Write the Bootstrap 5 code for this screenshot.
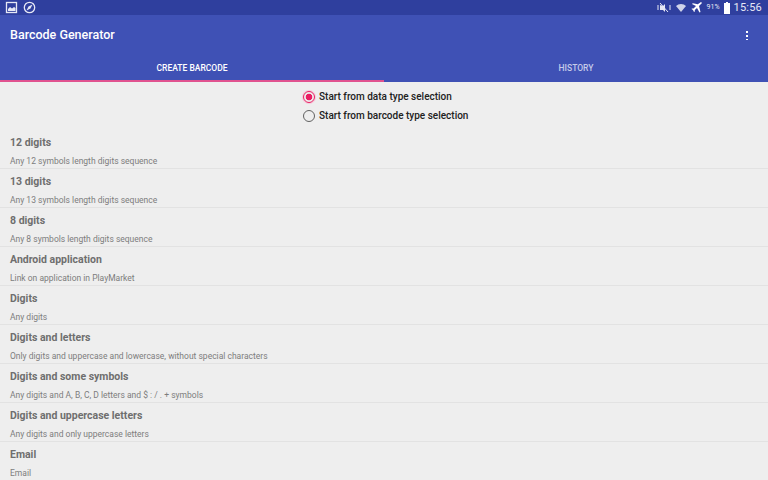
<!DOCTYPE html>
<html lang="en">
<head>
    <meta charset="UTF-8">
    <meta name="viewport" content="width=device-width, initial-scale=1.0">
    <title>Barcode Generator</title>
    <link rel="stylesheet" href="https://cdn.jsdelivr.net/npm/bootstrap@5.3.0/dist/css/bootstrap.min.css">
    <style>
        html, body { height: 100%; overflow: hidden; }
        body { background: #eeeeee; font-family: Roboto, "Liberation Sans", sans-serif; }
        .status-strip { height: 15px; background: #2f3f9e; padding: 0 6px 0 5px; color: #e6e8f5; }
        .status-strip svg { display: block; }
        .batt-text { font-size: 7px; line-height: 15px; }
        .clock-text { font-size: 11px; line-height: 15px; letter-spacing: .2px; }
        .app-head { background: #3f51b5; height: 67px; }
        .title-row { height: 39px; padding: 0 20px 0 10px; }
        .app-title { font-size: 12.5px; font-weight: 500; color: #fff; margin: 0; }
        .dots-menu { width: 2px; height: 10px; background: radial-gradient(circle, #fff 1px, transparent 1.2px) 0 0 / 2px 4px repeat-y; }
        .tab-strip { height: 28px; }
        .tab-item { width: 50%; text-align: center; font-size: 8.5px; font-weight: 500; line-height: 28px; color: #c5cbe9; }
        .tab-active { color: #fff; box-shadow: inset 0 -2px 0 #e0528f; }
        .mode-box { padding-top: 5px; height: 48px; }
        .mode-line { height: 19px; font-size: 10px; font-weight: 500; color: #212121; width: 180px; margin-left: 303px; }
        .radio-ring { width: 12px; height: 12px; border-radius: 50%; border: 1.5px solid #616161; margin-right: 4px; flex: none; }
        .radio-on { border-color: #e91e63; background: radial-gradient(circle, #e91e63 3.2px, transparent 3.6px); box-shadow: 0 0 0 1px #f6c9da; }
        .type-row { height: 39px; border-bottom: 1px solid #e2e2e2; padding: 0 10px; }
        .type-name { font-size: 10.5px; font-weight: 700; color: #6e6e6e; line-height: 14px; padding-top: 6px; }
        .type-desc { font-size: 8.5px; color: #7d7d7d; line-height: 12px; padding-top: 5px; }
    </style>
</head>
<body>
    <div class="status-strip d-flex align-items-center">
        <svg class="me-1" width="14" height="13" viewBox="0 0 14 13"><rect x="1.5" y="1.5" width="10" height="10" fill="none" stroke="#e6e8f5" stroke-width="1.3"/><path d="M3 10V8l2-2 2 1.5L9 6l1.5 1v3z" fill="#e6e8f5"/></svg>
        <svg width="13" height="13" viewBox="0 0 13 13"><circle cx="6.5" cy="6.5" r="5.2" fill="none" stroke="#e6e8f5" stroke-width="1.3"/><path d="M9.5 3.5 7.5 7.5 3.5 9.5 5.5 5.5z" fill="#e6e8f5"/></svg>
        <div class="ms-auto d-flex align-items-center">
            <svg width="14" height="11" viewBox="0 0 14 11" class="me-1"><path d="M1 3v5M13 3v5" stroke="#e6e8f5" stroke-width="1"/><path d="M3 3l3 1 2-2v8L6 8 3 8z" fill="#e6e8f5"/><path d="M3 1l8 9" stroke="#e6e8f5" stroke-width="1"/></svg>
            <svg width="12" height="11" viewBox="0 0 12 11" class="me-1"><path d="M1 4a7 7 0 0 1 10 0L6 10z" fill="#cfd3ea"/></svg>
            <svg width="12" height="11" viewBox="0 0 12 11" class="me-1"><path d="M11 1 8 4l1.5 6-1 .5L6 6 3.8 8v1.5L3 10 2 8 0.5 7l.5-.6H2.500L5 4 1 2l.8-.8 5 1L10 0z" fill="#fff"/></svg>
            <span class="batt-text me-1">91%</span>
            <svg width="6" height="12" viewBox="0 0 6 12" class="me-1"><path d="M2 0h2v1h2v11H0V1h2z" fill="#fff"/></svg>
            <span class="clock-text">15:56</span>
        </div>
    </div>
    <div class="app-head">
        <div class="title-row d-flex align-items-center justify-content-between">
            <h1 class="app-title">Barcode Generator</h1>
            <div class="dots-menu"></div>
        </div>
        <div class="tab-strip d-flex">
            <div class="tab-item tab-active">CREATE BARCODE</div>
            <div class="tab-item">HISTORY</div>
        </div>
    </div>
    <div class="mode-box">
        <div class="mode-line d-flex align-items-center"><span class="radio-ring radio-on"></span>Start from data type selection</div>
        <div class="mode-line d-flex align-items-center"><span class="radio-ring"></span>Start from barcode type selection</div>
    </div>
    <div id="typeList"></div>
    <script src="https://cdn.jsdelivr.net/npm/bootstrap@5.3.0/dist/js/bootstrap.bundle.min.js"></script>
    <script>
        const types = [
            ['12 digits', 'Any 12 symbols length digits sequence'],
            ['13 digits', 'Any 13 symbols length digits sequence'],
            ['8 digits', 'Any 8 symbols length digits sequence'],
            ['Android application', 'Link on application in PlayMarket'],
            ['Digits', 'Any digits'],
            ['Digits and letters', 'Only digits and uppercase and lowercase, without special characters'],
            ['Digits and some symbols', 'Any digits and A, B, C, D letters and $ : / . + symbols'],
            ['Digits and uppercase letters', 'Any digits and only uppercase letters'],
            ['Email', 'Email']
        ];
        document.getElementById('typeList').innerHTML = types.map(t =>
            `<div class="type-row"><div class="type-name">${t[0]}</div><div class="type-desc">${t[1]}</div></div>`
        ).join('');
    </script>
</body>
</html>
